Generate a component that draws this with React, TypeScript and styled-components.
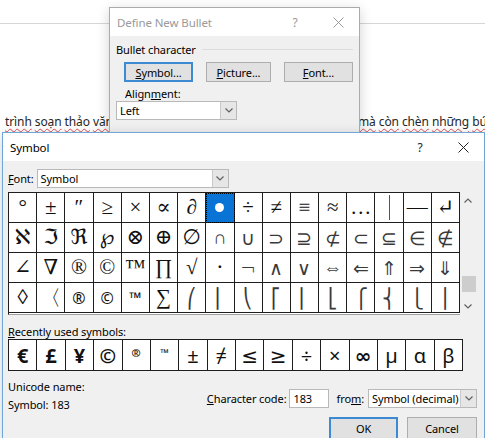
import React from "react";
import styled, { createGlobalStyle } from "styled-components";

const UI = `"Segoe UI", "Noto Sans", "DejaVu Sans", sans-serif`;
const SYM = `"Liberation Serif", "DejaVu Serif", "DejaVu Sans", serif`;
const THIN = `"DejaVu Sans ExtraLight", "DejaVu Sans", sans-serif`;

const GlobalStyle = createGlobalStyle`
  html, body { margin: 0; padding: 0; background: #fff; }
  body { font-family: ${UI}; }
`;

const mainRows: string[][] = [
  ["°", "±", "″", "≥", "×", "∝", "∂", "•", "÷", "≠", "≡", "≈", "…", "|", "—", "↵"],
  ["ℵ", "ℑ", "ℜ", "℘", "⊗", "⊕", "∅", "∩", "∪", "⊃", "⊇", "⊄", "⊂", "⊆", "∈", "∉"],
  ["∠", "∇", "®", "©", "™", "∏", "√", "⋅", "¬", "∧", "∨", "⇔", "⇐", "⇑", "⇒", "⇓"],
  ["◊", "〈", "®", "©", "™", "∑", "⎛", "⎜", "⎝", "⎡", "⎢", "⎣", "⎧", "⎨", "⎩", "⎪"],
];
const sansCells = new Set(["3-2", "3-3", "3-4"]);
const isThin = (r: number, c: number) => (r === 1 && c >= 7) || (r === 2 && c >= 8) || (r === 3 && c >= 6);

const recent = [
  { c: "€", bold: true },
  { c: "£", bold: true },
  { c: "¥", bold: true },
  { c: "©", bold: true },
  { c: "®", small: true },
  { c: "™", small: true },
  { c: "±" },
  { c: "≠" },
  { c: "≤" },
  { c: "≥" },
  { c: "÷" },
  { c: "×" },
  { c: "∞", bold: true },
  { c: "µ" },
  { c: "α" },
  { c: "β" },
];

const CloseIcon = ({ color }: { color: string }) => (
  <svg width="11" height="11" viewBox="0 0 11 11">
    <path d="M0.5 0.5 L10.5 10.5 M10.5 0.5 L0.5 10.5" stroke={color} strokeWidth="1" fill="none" />
  </svg>
);

const Chevron = ({ up }: { up?: boolean }) => (
  <svg width="8" height="5" viewBox="0 0 8 5">
    <polyline
      points={up ? "0.5,4.5 4,1 7.5,4.5" : "0.5,0.5 4,4 7.5,0.5"}
      fill="none"
      stroke="#606060"
      strokeWidth="1.2"
    />
  </svg>
);

const App: React.FC = () => {
  return (
    <>
      <GlobalStyle />
      <Page>
        <Ruler />
        <Paragraph>
          <Misspelled>trình</Misspelled> <Misspelled>soạn</Misspelled> <Misspelled>thảo</Misspelled>{" "}
          <Misspelled>văn</Misspelled> <Misspelled>bản</Misspelled> Word không chỉ giúp bạn định dạng số{" "}
          <Misspelled>mà</Misspelled> <Misspelled>còn</Misspelled> <Misspelled>chèn</Misspelled>{" "}
          <Misspelled>những</Misspelled> <Misspelled>bút</Misspelled>
        </Paragraph>

        <Window $left={109} $top={7} $width={251}>
          <TitleBar>
            <Title $dim>Define New Bullet</Title>
            <HelpButton $dim>?</HelpButton>
            <CloseButton>
              <CloseIcon color="#9a9a9a" />
            </CloseButton>
          </TitleBar>
          <DefineBody>
            <GroupHeader>Bullet character</GroupHeader>
            <ButtonRow>
              <PushButton $width={69} $default>
                <Key>S</Key>ymbol...
              </PushButton>
              <PushButton $width={65}>
                <Key>P</Key>icture...
              </PushButton>
              <PushButton $width={69}>
                <Key>F</Key>ont...
              </PushButton>
            </ButtonRow>
            <FieldLabel>
              Align<Key>m</Key>ent:
            </FieldLabel>
            <Combo $width={121}>
              <ComboValue>Left</ComboValue>
              <DropButton>
                <Chevron />
              </DropButton>
            </Combo>
          </DefineBody>
        </Window>

        <Window $left={2} $top={132} $width={483} $active>
          <TitleBar>
            <Title>Symbol</Title>
            <HelpButton>?</HelpButton>
            <CloseButton>
              <CloseIcon color="#222" />
            </CloseButton>
          </TitleBar>
          <SymbolBody>
            <FontRow>
              <span>
                <Key>F</Key>ont:
              </span>
              <Combo $width={192}>
                <ComboValue>Symbol</ComboValue>
                <DropButton>
                  <Chevron />
                </DropButton>
              </Combo>
            </FontRow>

            <GridArea>
              <CharGrid>
                {mainRows.map((row, r) =>
                  row.map((ch, c) => {
                    const selected = r === 0 && c === 7;
                    const bar = r === 0 && c === 13;
                    return (
                      <CharCell
                        key={`${r}-${c}`}
                        $selected={selected}
                        $sans={sansCells.has(`${r}-${c}`)}
                        $thin={isThin(r, c)}
                      >
                        {selected ? <SelectedDot /> : bar ? <VerticalBar /> : ch}
                      </CharCell>
                    );
                  })
                )}
              </CharGrid>
              <ScrollBar>
                <ScrollArrow>
                  <Chevron up />
                </ScrollArrow>
                <ScrollTrack>
                  <ScrollThumb $offset={67} />
                </ScrollTrack>
                <ScrollArrow>
                  <Chevron />
                </ScrollArrow>
              </ScrollBar>
            </GridArea>

            <SectionLabel>
              <Key>R</Key>ecently used symbols:
            </SectionLabel>
            <RecentGrid>
              {recent.map((s, i) => (
                <RecentCell key={i} $bold={s.bold} $small={s.small}>
                  {s.c}
                </RecentCell>
              ))}
            </RecentGrid>

            <Bottom>
              <Info>
                <div>Unicode name:</div>
                <div>Symbol: 183</div>
              </Info>
              <Controls>
                <CodeRow>
                  <span>
                    <Key>C</Key>haracter code:
                  </span>
                  <TextBox>183</TextBox>
                  <FromLabel>
                    fro<Key>m</Key>:
                  </FromLabel>
                  <Combo $width={109}>
                    <ComboValue>Symbol (decimal)</ComboValue>
                    <DropButton>
                      <Chevron />
                    </DropButton>
                  </Combo>
                </CodeRow>
                <DialogButtons>
                  <PushButton $width={69} $height={23} $default>
                    OK
                  </PushButton>
                  <PushButton $width={70} $height={23}>
                    Cancel
                  </PushButton>
                </DialogButtons>
              </Controls>
            </Bottom>
          </SymbolBody>
        </Window>
      </Page>
    </>
  );
};

export default App;

const Page = styled.div`
  position: relative;
  width: 485px;
  height: 438px;
  overflow: hidden;
  background: #fff;
`;

const Ruler = styled.div`
  height: 23px;
  border-bottom: 1px solid #d6d6d6;
`;

const Paragraph = styled.p`
  margin: 89px 0 0 5px;
  font-family: ${UI};
  font-size: 12px;
  letter-spacing: -0.1px;
  line-height: 18px;
  color: #262626;
  white-space: nowrap;
`;

const Misspelled = styled.span`
  text-decoration: underline wavy #e04a4a;
  text-decoration-thickness: 1px;
  text-underline-offset: 2px;
`;

const Window = styled.div<{ $left: number; $top: number; $width: number; $active?: boolean }>`
  position: absolute;
  left: ${p => p.$left}px;
  top: ${p => p.$top}px;
  width: ${p => p.$width}px;
  box-sizing: border-box;
  background: #f0f0f0;
  border: 1px solid ${p => (p.$active ? "#6ea6d8" : "#ababab")};
  box-shadow: 0 3px 12px rgba(0, 0, 0, 0.18);
  font-family: ${UI};
  font-size: 11px;
  letter-spacing: -0.1px;
  color: #000;
`;

const TitleBar = styled.div`
  display: flex;
  align-items: center;
  height: 28px;
  background: #fff;
`;

const Title = styled.div<{ $dim?: boolean }>`
  flex: 1;
  padding-left: 7px;
  font-size: 11.5px;
  color: ${p => (p.$dim ? "#9a9a9a" : "#000")};
`;

const HelpButton = styled.div<{ $dim?: boolean }>`
  width: 44px;
  text-align: center;
  font-size: 12px;
  color: ${p => (p.$dim ? "#9a9a9a" : "#222")};
`;

const CloseButton = styled.div`
  width: 42px;
  display: flex;
  justify-content: center;
`;

const Key = styled.span`
  text-decoration: underline;
  text-underline-offset: 1px;
`;

const DefineBody = styled.div`
  display: flex;
  flex-direction: column;
  align-items: flex-start;
  padding: 6px 6px 30px 6px;
`;

const GroupHeader = styled.div`
  display: flex;
  align-items: center;
  gap: 6px;
  width: 100%;
  line-height: 15px;
  &::after {
    content: "";
    flex: 1;
    border-top: 1px solid #dcdcdc;
  }
`;

const ButtonRow = styled.div`
  display: flex;
  justify-content: space-between;
  align-self: stretch;
  margin: 5px 0 0 8px;
`;

const PushButton = styled.div<{ $width: number; $height?: number; $default?: boolean }>`
  box-sizing: border-box;
  width: ${p => p.$width}px;
  height: ${p => p.$height ?? 20}px;
  display: flex;
  align-items: center;
  justify-content: center;
  background: #e1e1e1;
  border: ${p => (p.$default ? "2px solid #3c8ad2" : "1px solid #adadad")};
  color: #000;
`;

const FieldLabel = styled.div`
  margin: 4px 0 0 9px;
  line-height: 15px;
`;

const Combo = styled.div<{ $width: number }>`
  box-sizing: border-box;
  display: flex;
  width: ${p => p.$width}px;
  height: 19px;
  background: #fff;
  border: 1px solid #b9b9b9;
`;

const ComboValue = styled.div`
  flex: 1;
  display: flex;
  align-items: center;
  padding-left: 3px;
  white-space: nowrap;
  overflow: hidden;
`;

const DropButton = styled.div`
  width: 15px;
  display: flex;
  align-items: center;
  justify-content: center;
  background: #e6e6e6;
  border-left: 1px solid #c9c9c9;
`;

const SymbolBody = styled.div`
  padding: 8px 7px 0 5px;
`;

const FontRow = styled.div`
  display: flex;
  align-items: center;
  gap: 3px;
`;

const GridArea = styled.div`
  display: flex;
  margin-top: 4px;
`;

const CharGrid = styled.div`
  box-sizing: border-box;
  width: 452px;
  display: grid;
  grid-template-columns: repeat(16, 1fr);
  border-top: 1px solid #1e1e1e;
  border-left: 1px solid #1e1e1e;
  border-bottom: 1px solid #a0a0a0;
  padding-bottom: 1px;
  background: #fff;
`;

const CharCell = styled.div<{ $selected?: boolean; $sans?: boolean; $thin?: boolean }>`
  height: 29px;
  display: flex;
  align-items: center;
  justify-content: center;
  border-right: 1px solid #1e1e1e;
  border-bottom: 1px solid #1e1e1e;
  font-family: ${p => (p.$sans ? UI : p.$thin ? THIN : SYM)};
  font-weight: ${p => (p.$thin ? 200 : 400)};
  font-size: ${p => (p.$sans ? "16px" : p.$thin ? "19px" : "21px")};
  letter-spacing: 0;
  color: ${p => (p.$thin ? "#3a3a3a" : "#111")};
  background: ${p => (p.$selected ? "#0a74d6" : "#fff")};
  outline: ${p => (p.$selected ? "1px dotted #000" : "none")};
  outline-offset: -1px;
`;

const SelectedDot = styled.span`
  width: 9px;
  height: 9px;
  border-radius: 50%;
  background: #fff;
`;

const VerticalBar = styled.span`
  width: 1px;
  height: 25px;
  background: #555;
`;

const ScrollBar = styled.div`
  width: 16px;
  display: flex;
  flex-direction: column;
  background: #f0f0f0;
`;

const ScrollArrow = styled.div`
  height: 17px;
  display: flex;
  align-items: center;
  justify-content: center;
`;

const ScrollTrack = styled.div`
  flex: 1;
  display: flex;
  flex-direction: column;
  align-items: flex-end;
`;

const ScrollThumb = styled.div<{ $offset: number }>`
  margin-top: ${p => p.$offset}px;
  width: 14px;
  height: 16px;
  background: #cdcdcd;
`;

const SectionLabel = styled.div`
  margin-top: 9px;
  line-height: 15px;
`;

const RecentGrid = styled.div`
  box-sizing: border-box;
  width: 455px;
  display: grid;
  grid-template-columns: repeat(16, 1fr);
  border-top: 1px solid #1e1e1e;
  border-left: 1px solid #1e1e1e;
  background: #fff;
`;

const RecentCell = styled.div<{ $bold?: boolean; $small?: boolean }>`
  height: 31px;
  display: flex;
  align-items: ${p => (p.$small ? "flex-start" : "center")};
  padding-top: ${p => (p.$small ? "5px" : "0")};
  box-sizing: border-box;
  justify-content: center;
  border-right: 1px solid #1e1e1e;
  border-bottom: 1px solid #1e1e1e;
  font-family: ${UI};
  font-size: ${p => (p.$small ? "11px" : "20px")};
  font-weight: ${p => (p.$bold || p.$small ? 700 : 400)};
  letter-spacing: 0;
  color: #111;
`;

const Bottom = styled.div`
  display: flex;
  justify-content: space-between;
`;

const Info = styled.div`
  margin-top: 7px;
  line-height: 18px;
`;

const Controls = styled.div`
  display: flex;
  flex-direction: column;
  align-items: flex-end;
`;

const CodeRow = styled.div`
  display: flex;
  align-items: center;
  margin-top: 18px;
`;

const TextBox = styled.div`
  box-sizing: border-box;
  width: 40px;
  height: 19px;
  margin-left: 3px;
  padding-left: 3px;
  display: flex;
  align-items: center;
  background: #fff;
  border: 1px solid #b9b9b9;
`;

const FromLabel = styled.span`
  margin: 0 4px 0 7px;
`;

const DialogButtons = styled.div`
  display: flex;
  gap: 9px;
  margin-top: 9px;
`;
